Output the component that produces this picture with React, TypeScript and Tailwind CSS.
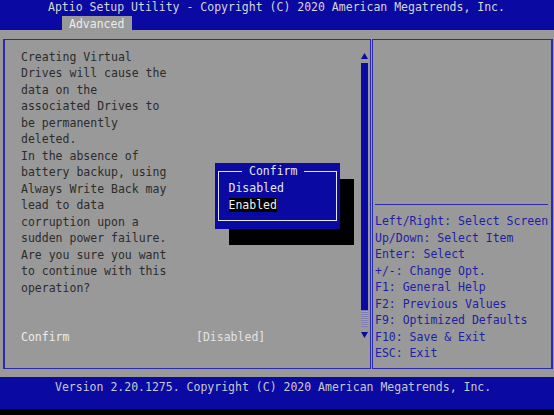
import React from "react";

const helpText = [
  "Creating Virtual",
  "Drives will cause the",
  "data on the",
  "associated Drives to",
  "be permanently",
  "deleted.",
  "In the absence of",
  "battery backup, using",
  "Always Write Back may",
  "lead to data",
  "corruption upon a",
  "sudden power failure.",
  "Are you sure you want",
  "to continue with this",
  "operation?",
  "",
  "",
];

const keyHelp = [
  "Left/Right: Select Screen",
  "Up/Down: Select Item",
  "Enter: Select",
  "+/-: Change Opt.",
  "F1: General Help",
  "F2: Previous Values",
  "F9: Optimized Defaults",
  "F10: Save & Exit",
  "ESC: Exit",
];

function ArrowUp() {
  return (
    <svg width="7" height="6" viewBox="0 0 7 6" className="block">
      <polygon points="3.5,0 7,6 0,6" fill="#0a0aa2" />
    </svg>
  );
}

function ArrowDown() {
  return (
    <svg width="7" height="6" viewBox="0 0 7 6" className="block">
      <polygon points="0,0 7,0 3.5,6" fill="#0a0aa2" />
    </svg>
  );
}

export default function App() {
  return (
    <div className="relative w-[554px] h-[415px] bg-black overflow-hidden font-['DejaVu_Sans_Mono',monospace] text-[11.5px] whitespace-pre">
      {/* header */}
      <div className="h-[30px] bg-[#0a0aa2] flex flex-col">
        <div className="h-[15px] leading-[15px] pl-[48px] text-[#d6d6d6]">
          Aptio Setup Utility - Copyright (C) 2020 American Megatrends, Inc.
        </div>
        <div className="flex pl-[62px] mt-[1px]">
          <div className="h-[14px] w-[70px] bg-[#999999] leading-[16px] pl-[7px] text-[#ececec]">
            Advanced
          </div>
        </div>
      </div>

      {/* body */}
      <div className="h-[347px] bg-[#999999] pt-[9px] pl-[3px] pr-[1px]">
        <div className="flex h-[330px]">
          {/* left panel */}
          <div className="w-[368px] h-full border-l-2 border-y border-r border-[#2a2aaa] flex">
            <div className="flex-1 pt-[8.5px] pl-[16px] text-[#2c2c2c]">
              {helpText.map((line, i) => (
                <div key={i} className="h-[16.5px] leading-[16.5px]">
                  {line}
                </div>
              ))}
              <div className="h-[16.5px] leading-[16.5px] flex">
                <span className="w-[175px] text-[#ececec]">Confirm</span>
                <span className="text-[#e2e2e2]">[Disabled]</span>
              </div>
            </div>
            {/* scrollbar */}
            <div className="w-[7px] mr-[2px] pt-[13px] flex flex-col">
              <ArrowUp />
              <div className="mt-[4px] h-[247px] bg-[#0a0aa2]" />
              <div className="h-[17px] bg-[repeating-linear-gradient(0deg,#7c7cb0_0px,#7c7cb0_1px,#a0a0b8_1px,#a0a0b8_2px)]" />
              <div className="mt-[5px]">
                <ArrowDown />
              </div>
            </div>
          </div>

          {/* right panel */}
          <div className="ml-[1px] flex-1 h-full border-l border-y border-r-2 border-[#2a2aaa] flex flex-col">
            <div className="h-[164px]" />
            <div className="ml-[2px] mr-[3px] h-[1px] bg-[#2a2aaa]" />
            <div className="pt-[8px] pl-[2px] text-[#1e1ea6]">
              {keyHelp.map((line) => (
                <div key={line} className="h-[16.5px] leading-[16.5px]">
                  {line}
                </div>
              ))}
            </div>
          </div>
        </div>
      </div>

      {/* footer */}
      <div className="h-[32px] bg-[#0a0aa2] pt-[2px] pl-[55px] leading-[16.5px] text-[#c8c8cc]">
        Version 2.20.1275. Copyright (C) 2020 American Megatrends, Inc.
      </div>

      {/* confirm popup shadow */}
      <div className="absolute left-[229px] top-[179px] w-[125px] h-[66px] bg-black" />

      {/* confirm popup */}
      <div className="absolute left-[215px] top-[163px] w-[125px] h-[66px] bg-[#0a0aa2] pt-[8px] px-[3px]">
        <div className="relative h-[50px] border-[1.5px] border-[#e6e6e6] pl-[9.5px] pt-[8px] text-[#e6e6e6]">
          <div className="absolute left-[23px] top-[-9px] h-[16px] leading-[16px] px-[7px] bg-[#0a0aa2]">
            Confirm
          </div>
          <div className="h-[16px] leading-[16px]">Disabled</div>
          <div className="h-[16px] pt-[1px]">
            <span className="inline-block h-[14px] leading-[14px] bg-black text-[#f0f0f0]">
              Enabled
            </span>
          </div>
        </div>
      </div>
    </div>
  );
}
